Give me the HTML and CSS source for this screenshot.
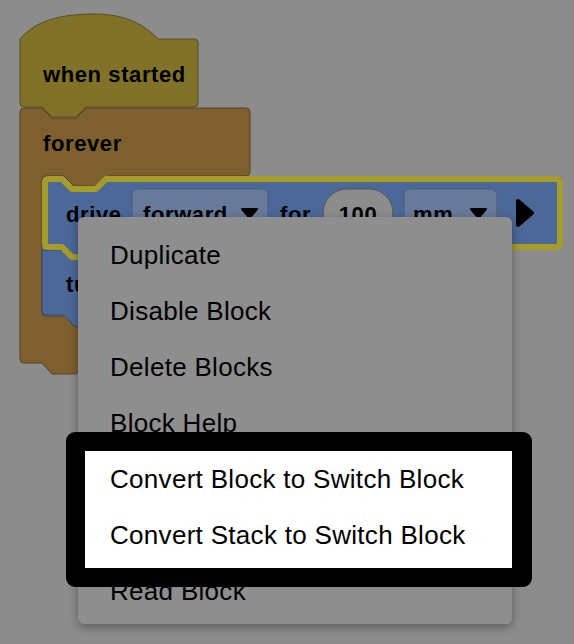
FILE: index.html
```html
<!DOCTYPE html>
<html lang="en">
<head>
<meta charset="utf-8">
<title>Block context menu</title>
<link rel="stylesheet" href="styles.css">
</head>
<body>
<div class="workspace">
  <svg class="blocks" width="574" height="644" viewBox="0 0 574 644" xmlns="http://www.w3.org/2000/svg">
    <!-- when started (hat) -->
    <path class="blk-hat" d="M20,39 C36,20 62,14 95,14 C125,14 145,25 158,39 L194,39 Q198,39 198,43 L198,103 Q198,107 194,107 L86,107 L76,117 L52,117 L42,107 L24,107 Q20,107 20,103 Z"/>
    <!-- forever (C block) -->
    <path class="blk-forever" d="M20,112 Q20,108 24,108 L42,108 L52,118 L76,118 L86,108 L246,108 Q250,108 250,112 L250,172 Q250,176 246,176 L108,176 L98,186 L74,186 L64,176 L46,176 Q42,176 42,180 L42,312 Q42,316 46,316 L246,316 Q250,316 250,320 L250,359 Q250,363 246,363 L86,363 L76,374 L52,374 L42,363 L24,363 Q20,363 20,359 Z"/>
    <text class="block-label" x="43" y="82">when started</text>
    <text class="block-label" x="43" y="151">forever</text>
    <!-- turn block -->
    <path class="blk-motion" d="M42,250 L300,250 L300,315 L108,315 L98,326 L74,326 L64,315 L46,315 Q42,315 42,311 Z"/>
    <text class="block-label" x="66" y="292">turn</text>
    <!-- drive block (selected) -->
    <path class="blk-motion blk-selected" d="M45,183 Q45,179 49,179 L62,179 L72,189 L96,189 L106,179 L556,179 Q560,179 560,183 L560,243 Q560,247 556,247 L106,247 L96,257 L72,257 L62,247 L49,247 Q45,247 45,243 Z"/>
    <text class="block-label" x="66" y="222">drive</text>
    <rect class="field-drop" x="132" y="189" width="136" height="48" rx="6"/>
    <text class="block-label" x="143" y="222">forward</text>
    <path class="tri" d="M242,209 L257,209 L249.5,218 Z"/>
    <text class="block-label" x="280" y="222">for</text>
    <rect class="field-num" x="323" y="189" width="70" height="48" rx="24"/>
    <text class="block-label" x="358" y="222" text-anchor="middle">100</text>
    <rect class="field-drop" x="404" y="189" width="93" height="48" rx="6"/>
    <text class="block-label" x="413" y="222">mm</text>
    <path class="tri" d="M471,209 L486,209 L478.5,218 Z"/>
    <path class="arrow" d="M518,201 L532,213 L518,225 Z"/>
  </svg>

  <div class="context-menu">
    <div class="menu-item">Duplicate</div>
    <div class="menu-item">Disable Block</div>
    <div class="menu-item">Delete Blocks</div>
    <div class="menu-item">Block Help</div>
    <div class="menu-highlight">
      <div class="menu-item">Convert Block to Switch Block</div>
      <div class="menu-item">Convert Stack to Switch Block</div>
    </div>
    <div class="menu-item">Read Block</div>
  </div>
</div>
</body>
</html>
```

FILE: styles.css
```css
html, body {
  margin: 0;
  padding: 0;
  background: #8c8c8c;
}

.workspace {
  position: relative;
  width: 574px;
  height: 644px;
  overflow: hidden;
  background: #8c8c8c;
  font-family: "Liberation Sans", Arial, sans-serif;
}

.blocks {
  position: absolute;
  left: 0;
  top: 0;
  display: block;
}

.blk-hat {
  fill: #807229;
  stroke: #57501f;
  stroke-width: 1;
}

.blk-forever {
  fill: #7e5f2f;
  stroke: #56421f;
  stroke-width: 1;
}

.blk-motion {
  fill: #4b6899;
  stroke: #34496d;
  stroke-width: 1;
}

.blk-selected {
  stroke: #a59d2a;
  stroke-width: 6;
  stroke-linejoin: round;
}

.block-label {
  font-family: "Liberation Sans", Arial, sans-serif;
  font-weight: bold;
  font-size: 22px;
  letter-spacing: 0.6px;
  fill: #000;
}

.field-drop {
  fill: #677a9a;
  stroke: #4b5e7f;
  stroke-width: 1;
}

.field-num {
  fill: #8c8c8c;
  stroke: #555555;
  stroke-width: 1;
}

.tri {
  fill: #000;
  stroke: #000;
  stroke-width: 2;
  stroke-linejoin: round;
}

.arrow {
  fill: #000;
  stroke: #000;
  stroke-width: 4;
  stroke-linejoin: round;
}

.context-menu {
  position: absolute;
  left: 78px;
  top: 217px;
  width: 434px;
  padding: 10px 0 5px;
  background: #8e8e8e;
  border-radius: 6px;
  box-shadow: 0 3px 10px rgba(0, 0, 0, 0.35);
  z-index: 2;
}

.menu-item {
  height: 56px;
  line-height: 56px;
  padding-left: 32px;
  font-size: 26px;
  letter-spacing: 0.3px;
  color: #000;
  white-space: nowrap;
}

.menu-highlight {
  position: relative;
  z-index: 1;
  margin: 0 0 -5px 7px;
  padding-bottom: 5px;
}

.menu-highlight::before {
  content: "";
  position: absolute;
  top: -19px;
  left: -19px;
  right: -20px;
  bottom: -19px;
  background: #ffffff;
  border-style: solid;
  border-color: #000;
  border-width: 19px 20px 19px 19px;
  border-radius: 9px;
  z-index: -1;
}

.menu-highlight .menu-item {
  padding-left: 25px;
}
```
